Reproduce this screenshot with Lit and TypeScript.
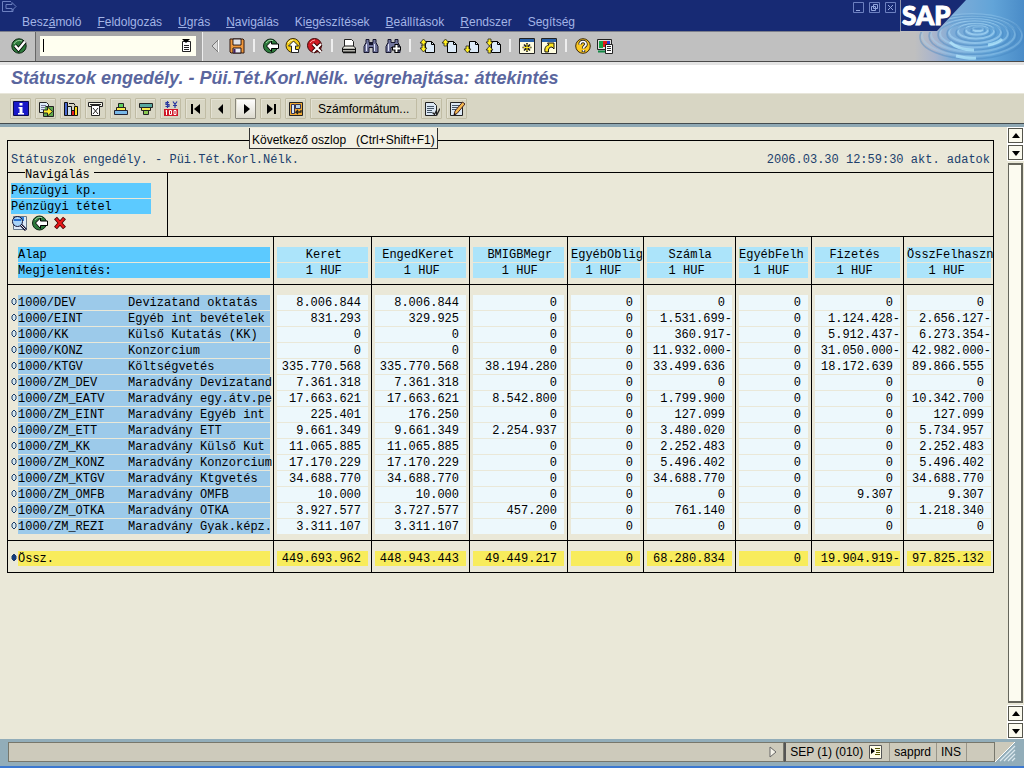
import { LitElement, html, css, svg, nothing } from "lit";
import { customElement } from "lit/decorators.js";

const pageShape = svg`<path d="M6.5 3.5h6l3 3v8h-9z" fill="#dceaf8" stroke="#000"/><path d="M12.5 3.5v3h3" fill="none" stroke="#000"/>`;
const upHead = (x: number, y: number) => svg`<path d="M${x} ${y + 4}l3.5-4 3.5 4h-2v3h-3v-3z" fill="#ffee20" stroke="#222" stroke-width=".8"/>`;
const downHead = (x: number, y: number) => svg`<path d="M${x} ${y + 3}l3.5 4 3.5-4h-2v-3h-3v3z" fill="#ffee20" stroke="#222" stroke-width=".8"/>`;

const icons: Record<string, unknown> = {
  check: svg`<circle cx="8" cy="8" r="7.2" fill="#2d7a3c" stroke="#0c2412"/><path d="M3 6a6 6 0 0 1 8-3" stroke="#9ccf9c" fill="none"/><path d="M4 7.5l3.5 4 6.5-8" fill="none" stroke="#000" stroke-width="4"/><path d="M4 7.5l3.5 4 6.5-8" fill="none" stroke="#fff" stroke-width="2.4"/>`,
  save: svg`<path d="M1 1h13l1 1v13H2l-1-1z" fill="#f0983c" stroke="#301810"/><path d="M4 1h8v6H4z" fill="#fff" stroke="#201010"/><path d="M4 10h8v5H4z" fill="#e8e8f4" stroke="#201010"/><path d="M5.5 11v4" stroke="#402060" stroke-width="2"/><path d="M5 3h6M5 5h6" stroke="#a8a8b8" stroke-width=".7"/>`,
  back: svg`<circle cx="7.5" cy="8" r="7" fill="#2d7a3c" stroke="#0c2412"/><path d="M3 5a6 6 0 0 1 7-2.5" stroke="#9ccf9c" fill="none"/><path d="M3.5 8l5-5v3h7v4.500h-7v3z" fill="#fff" stroke="#000"/>`,
  exit: svg`<circle cx="8" cy="7.5" r="7" fill="#f4cc18" stroke="#3c2c08"/><path d="M3 5a6 6 0 0 1 5-3" stroke="#fff8b0" fill="none"/><path d="M8.5 3l5 5h-3v3.5h3v3h-7V8h-3z" fill="#fff" stroke="#222"/>`,
  cancel: svg`<circle cx="7.5" cy="7.5" r="7" fill="#d01c24" stroke="#3c0808"/><path d="M3 5a6 6 0 0 1 5-3" stroke="#ffa0a0" fill="none"/><path d="M6 6l8 8M14 6l-8 8" stroke="#300" stroke-width="4"/><path d="M6 6l8 8M14 6l-8 8" stroke="#fff" stroke-width="2.2"/>`,
  print: svg`<path d="M3.5 1.5h7l2 2v6h-9z" fill="#fff" stroke="#222"/><path d="M1.5 10l2-2h9l2 2v4h-13z" fill="#e8e8e0" stroke="#111"/><path d="M1 11.5h14M2 14.5h13" stroke="#111" stroke-width="1.4"/>`,
  find: svg`<path d="M3 1.5h3v3h4v-3h3v3l2 4v6h-5v-5H6v5H1v-6l2-4z" fill="#70749c" stroke="#15152c"/><path d="M3.5 6v7M11.5 6v7" stroke="#e0e4f8"/><path d="M6 6h4" stroke="#15152c" stroke-width="2"/>`,
  findnext: svg`<path d="M3 1.5h3v3h4v-3h3v3l2 4v6h-5v-5H6v5H1v-6l2-4z" fill="#70749c" stroke="#15152c"/><path d="M3.5 6v7" stroke="#e0e4f8"/><path d="M11.5 6v9M7 10.5h9" stroke="#000" stroke-width="4"/><path d="M11.5 7v7M8 10.5h7" stroke="#fff" stroke-width="2"/>`,
  first: svg`${pageShape}${upHead(1, 1)}${downHead(1, 7)}`,
  prev: svg`${pageShape}${upHead(1, 1)}`,
  next: svg`${pageShape}${downHead(1, 8)}`,
  last: svg`${pageShape}${downHead(1, 1)}${upHead(1, 8)}`,
  session: svg`<path d="M.5.5h15v15H.5z" fill="#fffde0" stroke="#222"/><path d="M1 1h14v3H1z" fill="#2860a8"/><path d="M8 5v9M3.5 9.5h9M5 6.5l6 6M11 6.5l-6 6" stroke="#222" stroke-width="1.6"/><path d="M8 6v7M4.5 9.5h7" stroke="#ffe820"/>`,
  shortcut: svg`<path d="M.5.5h15v15H.5z" fill="#fffde0" stroke="#222"/><path d="M1 1h14v3H1z" fill="#2860a8"/><path d="M4 14c-1-5 2-7 4-7l-1.5-2H13v6l-2-2c-3 0-4 2-3.5 5z" fill="#ffe820" stroke="#111"/>`,
  help: svg`<circle cx="8" cy="8" r="7.3" fill="#fbc820" stroke="#3c2808"/><path d="M5 6.5C5 2 11.5 3 11 6.5 10.5 8.5 8.5 8 8.5 10.5M8.5 12v2" fill="none" stroke="#222" stroke-width="3.4"/><path d="M5 6.5C5 2 11.5 3 11 6.5 10.5 8.5 8.5 8 8.5 10.5M8.5 12v1.6" fill="none" stroke="#fff" stroke-width="1.7"/>`,
  layout: svg`<path d="M.5 1.5h14v10H.5z" fill="#ddd" stroke="#222"/><path d="M2 3h4v7H2z" fill="#18a048"/><path d="M6 3h4v6H6z" fill="#e01818"/><path d="M10 3h3v5h-3z" fill="#2838d0"/><path d="M1 13.500h8" stroke="#184" stroke-width="2"/><path d="M8.5 6.5h7v9h-7z" fill="#fff" stroke="#222"/><path d="M10 8.5h4M10 10.5h4M10 12.5h4" stroke="#333"/>`,
  info: svg`<path d="M.5.5h15v14H.5z" fill="#1818c8" stroke="#0a0a50"/><path d="M6.5 2h3v2.5h-3zM5.5 6h4v6h1.5v1.5h-6V12h1.5V7.5h-1z" fill="#fff"/>`,
  export: svg`<path d="M1.5 1.5h7l2 2v8h-9z" fill="#dceaf8" stroke="#222"/><path d="M3 4.5h5M3 6.5h5M3 8.5h3" stroke="#779"/><path d="M7.5 5.5h8v10h-10v-4" fill="#60a850" stroke="#222"/><path d="M5.5 9h4V6l5 4.5-5 4.5v-3h-4z" fill="#ffee30" stroke="#222"/>`,
  chart: svg`<path d="M1.5 1.5h3v13h-3z" fill="#4868d0" stroke="#111"/><path d="M4.5 5.5h4v9h-4z" fill="#c8dcf0" stroke="#111"/><path d="M8.5 9.5h3v5h-3z" fill="#e82020" stroke="#111"/><path d="M11.5 5.5h3v9h-3z" fill="#ffe020" stroke="#111"/><path d="M6 2.5h5l1 2" fill="none" stroke="#111"/>`,
  filter: svg`<path d="M.5 1.5h14v4H.5z" fill="#f4f4e8" stroke="#222"/><path d="M3.5 4.500h8v10h-8z" fill="#fff" stroke="#222"/><path d="M5 7l5 6M10 7l-5 6M2 3.5h11" stroke="#222"/>`,
  sortup: svg`<path d="M5.5 2.5h5v4h-5z" fill="#5cd060" stroke="#222"/><path d="M3.5 6.5h9v3h-9z" fill="#f8e850" stroke="#222"/><path d="M1.5 9.5h13v4h-13z" fill="#78b8e8" stroke="#223"/>`,
  sortdown: svg`<path d="M1.5 2.5h13v4h-13z" fill="#58a8a0" stroke="#222"/><path d="M3.5 6.5h9v3h-9z" fill="#f8e850" stroke="#222"/><path d="M5.5 9.5h5v4h-5z" fill="#88c850" stroke="#222"/>`,
  currency: svg`<path d="M1 8h14v7H1z" fill="#d01828"/><path d="M3.5 9v5M2.5 10h1M6.5 9.5h2v4h-2zM11 9.5h2v4h-2z" fill="none" stroke="#fff"/><path d="M6 1.5H3v2h3v2H2.5M4.5 0v7M10 .5l2 3 2-3M12 3v4M10 4.5h4" fill="none" stroke="#2838a0" stroke-width="1.2"/>`,
  colfirst: svg`<path d="M4 3v10" stroke="#000" stroke-width="2"/><path d="M12 3v10L6 8z"/>`,
  colprev: svg`<path d="M10 3v10L5 8z"/>`,
  colnext: svg`<path d="M6 3v10l6-5z"/>`,
  collast: svg`<path d="M12 3v10" stroke="#000" stroke-width="2"/><path d="M4 3v10l6-5z"/>`,
  jump: svg`<path d="M1.500 1.5h13v13h-13z" fill="#f0a830" stroke="#222"/><path d="M3.5 3.500h3v9h-3z" fill="#d8e8f8" stroke="#335"/><path d="M7.500 3.500h5v4h-5z" fill="#b8d4e8" stroke="#335"/><path d="M13.500 11H8l2-2M8 11l2 2M13 11V9" fill="none" stroke="#222" stroke-width="1.3"/>`,
  details: svg`<path d="M1.5 1.5h8l3 3v10h-11z" fill="#dce8f4" stroke="#222"/><path d="M3 5.5h7M3 7.5h7M3 9.5h5M3 11.5h5" stroke="#456"/><path d="M8.5 11.5l2 2 1.5-3 1 3 3-6" fill="none" stroke="#222" stroke-width="1.3"/>`,
  edit: svg`<path d="M1.5 1.5h12v13h-12z" fill="#dce8f4" stroke="#222"/><path d="M3 4.5h8M3 6.5h6M3 8.5h4" stroke="#456"/><path d="M5 14l1-4 7.5-9 2.5 2-8 9.5z" fill="#f4b850" stroke="#422"/><path d="M5 14l.5-2 1.5 1.2z"/>`,
  search: svg`<path d="M2.5 1.5h13v13h-13z" fill="#dceaf8" stroke="#678"/><path d="M5 2h8v4H5z" fill="#3080d8"/><circle cx="6.5" cy="6.5" r="5" fill="#a8d4f8" stroke="#113"/><path d="M3 5h7" stroke="#2870d0" stroke-width="2"/><path d="M10 10l5 5" stroke="#113" stroke-width="3"/><path d="M10 10l4.5 4.5" stroke="#eee"/>`,
  delete: svg`<path d="M2.5 3l9 10M11.5 3l-9 10" stroke="#400" stroke-width="4"/><path d="M3 3.5l8 9M11 3.5l-8 9" stroke="#e81818" stroke-width="2.4"/>`,
  up: svg`<path d="M8 5l4 5H4z"/>`,
  down: svg`<path d="M8 11l4-5H4z"/>`,
  list: svg`<path d="M4.5 4.5h8v10h-8z" fill="#fff" stroke="#222"/><path d="M4 2h8l-4 4z"/><path d="M6 8.5h5M6 10.5h5M6 12.5h5" stroke="#222"/>`,
  system: svg`<path d="M1.5 1.5h12v13h-12z" fill="#fffde8" stroke="#555"/><path d="M3 4l4 3-4 3z"/><path d="M7 4.5h5M8 6.5h4M8 8.5h4M7 10.5h5" stroke="#550"/>`,
  fold: svg`<path d="M11 2v12L5 8z" fill="#d8d8d8" stroke="#777"/><path d="M11.5 2v12" stroke="#fff"/>`,
  unfold: svg`<path d="M5 3v10l6-5z" fill="#f4f2e8" stroke="#666"/>`,
};

const icon = (name: string) => html`<svg class="icon" viewBox="0 0 16 16" aria-hidden="true">${icons[name]}</svg>`;

const menu: [string, string, string][] = [
  ["Besz", "á", "moló"], ["", "F", "eldolgozás"], ["", "U", "grás"], ["", "N", "avigálás"],
  ["Ki", "e", "gészítések"], ["", "B", "eállítások"], ["", "R", "endszer"], ["Se", "g", "ítség"],
];

const systemTools = [
  ["fold", "save"], ["back", "exit", "cancel"], ["print", "find", "findnext"],
  ["first", "prev", "next", "last"], ["session", "shortcut"], ["help", "layout"],
];

// Title, indent of the title, indent of the unit (in characters), column width.
const columns: [string, number, number, number][] = [
  ["Keret", 4, 4, 98], ["EngedKeret", 1, 4, 98], ["BMIGBMegr", 2, 4, 98], ["EgyébOblig", 0, 2, 76],
  ["Számla", 3, 3, 92], ["EgyébFelh", 0, 2, 76], ["Fizetés", 2, 3, 92], ["ÖsszFelhaszn", 0, 3, 89],
];

const rows: [string, string, string][] = [
  ["DEV", "Devizatand oktatás", "8.006.844 8.006.844 0 0 0 0 0 0"],
  ["EINT", "Egyéb int bevételek", "831.293 329.925 0 0 1.531.699- 0 1.124.428- 2.656.127-"],
  ["KK", "Külső Kutatás (KK)", "0 0 0 0 360.917- 0 5.912.437- 6.273.354-"],
  ["KONZ", "Konzorcium", "0 0 0 0 11.932.000- 0 31.050.000- 42.982.000-"],
  ["KTGV", "Költségvetés", "335.770.568 335.770.568 38.194.280 0 33.499.636 0 18.172.639 89.866.555"],
  ["ZM_DEV", "Maradvány Devizatand", "7.361.318 7.361.318 0 0 0 0 0 0"],
  ["ZM_EATV", "Maradvány egy.átv.pe", "17.663.621 17.663.621 8.542.800 0 1.799.900 0 0 10.342.700"],
  ["ZM_EINT", "Maradvány Egyéb int", "225.401 176.250 0 0 127.099 0 0 127.099"],
  ["ZM_ETT", "Maradvány ETT", "9.661.349 9.661.349 2.254.937 0 3.480.020 0 0 5.734.957"],
  ["ZM_KK", "Maradvány Külső Kut", "11.065.885 11.065.885 0 0 2.252.483 0 0 2.252.483"],
  ["ZM_KONZ", "Maradvány Konzorcium", "17.170.229 17.170.229 0 0 5.496.402 0 0 5.496.402"],
  ["ZM_KTGV", "Maradvány Ktgvetés", "34.688.770 34.688.770 0 0 34.688.770 0 0 34.688.770"],
  ["ZM_OMFB", "Maradvány OMFB", "10.000 10.000 0 0 0 0 9.307 9.307"],
  ["ZM_OTKA", "Maradvány OTKA", "3.927.577 3.727.577 457.200 0 761.140 0 0 1.218.340"],
  ["ZM_REZI", "Maradvány Gyak.képz.", "3.311.107 3.311.107 0 0 0 0 0 0"],
];
const totals = "449.693.962 448.943.443 49.449.217 0 68.280.834 0 19.904.919- 97.825.132";

@customElement("sap-brand")
class SapBrand extends LitElement {
  static styles = css`
    :host { display: block; }
    svg { display: block; width: 124px; height: 61px; }
    text { font: 900 26px Lato, sans-serif; fill: #fff; stroke: #fff; stroke-width: 1px; }
  `;
  render() {
    return html`<svg viewBox="0 0 124 61" role="img" aria-label="SAP">
      <defs>
        <linearGradient id="water" x1="0" x2="1" y1="0" y2="0">
          <stop offset="0" stop-color="#bfbfbf"/><stop offset=".12" stop-color="#bfbfbf"/>
          <stop offset=".28" stop-color="#a9b4cc"/><stop offset=".42" stop-color="#7fadd8"/>
          <stop offset=".75" stop-color="#62a4d8"/><stop offset="1" stop-color="#4a8cc8"/>
        </linearGradient>
        <clipPath id="pool"><path d="M66 0h58v61H10V32h27z"/></clipPath>
      </defs>
      <rect width="124" height="61" fill="url(#water)"/>
      <g clip-path="url(#pool)" fill="none">
        ${[5, 11, 18, 26, 34, 42, 50].map((r, i) => svg`
          <ellipse cx=${78 - i} cy=${29 + i} rx=${r} ry=${r * 0.42} stroke="#a8d8f6" stroke-width="2" opacity=${0.8 - i * 0.08}/>
          <ellipse cx=${78 - i} cy=${31 + i} rx=${r + 2} ry=${r * 0.42 + 1} stroke="#4484c0" stroke-width="1.6" opacity=".4"/>`)}
        <path d="M50 42q8 8 24 8M56 56q14 3 20 2M88 45q10-2 14-6" stroke="#b8ecff" stroke-width="3" opacity=".7"/>
      </g>
      <path d="M0 0h66L37 31H0z" fill="#172a74"/>
      <path d="M.5 0v31" stroke="#8d94a8"/>
      <text x="2" y="25">SAP</text>
    </svg>`;
  }
}

@customElement("app-root")
class AppRoot extends LitElement {
  static styles = css`
    :host { display: flex; flex-direction: column; min-height: 100vh; position: relative; background: #eae8d8; color: #000; font: 12px/16px "Liberation Sans", Arial, sans-serif; }
    *, *::before, *::after { box-sizing: border-box; }
    button { font: inherit; color: inherit; margin: 0; padding: 0; border: 0; background: none; display: flex; align-items: center; justify-content: center; }
    .icon { width: 16px; height: 16px; display: block; flex: none; }
    .titlebar { height: 32px; background: #172a74; border-bottom: 1px solid #7c7f8c; display: flex; justify-content: space-between; align-items: flex-start; }
    .lead { display: flex; }
    .appmark { width: 16px; height: 14px; margin-left: 1px; }
    .menu { display: flex; gap: 16px; margin: 14px 0 0 5px; color: #a3b4e6; }
    .windowbox { display: flex; gap: 5px; margin: 2px 128px 0 0; }
    .windowbox svg { width: 11px; height: 11px; display: block; }
    .brand { position: absolute; top: 0; right: 0; }
    .system { height: 30px; background: #c0c0c0; border-bottom: 1px solid #4a4a4a; display: flex; align-items: stretch; }
    .enter { width: 36px; border-right: 1px solid #666; padding: 0 5px 2px 7px; }
    .command { background: #a6a6a6; border-right: 1px solid #eee; width: 167px; padding: 4px 6px 5px 4px; position: relative; display: flex; }
    .command input { flex: 1; min-width: 0; border: 0; border-radius: 0; padding: 0 20px 0 4px; background: #fffff0; font: inherit; outline: 0; }
    .history { position: absolute; right: 8px; top: 5px; height: 16px; width: 16px; }
    .caret { position: absolute; left: 7px; top: 7px; width: 1px; height: 13px; background: #000; }
    .tools { display: flex; align-items: center; gap: 6px; padding: 0 0 2px 4px; }
    .rule { width: 6px; height: 13px; background: linear-gradient(90deg, transparent 2px, #eee 2px, #eee 4px, transparent 4px); }
    .heading { margin: 0; height: 31px; background: #fff; border-top: 3px solid #e4e4e4; font: italic bold 18px/26px "Liberation Sans", Arial, sans-serif; color: #5a669e; padding-left: 11px; white-space: nowrap; }
    .actions { background: #d8d6c4; border-top: 1px solid #e8e6da; border-bottom: 3px solid #8ea8b4; padding: 4px 10px 5px; display: flex; gap: 4px; position: relative; }
    .actions::after { content: ""; position: absolute; left: 0; right: 0; bottom: 0; height: 1px; background: #434b4e; }
    .action { width: 21px; height: 21px; border: 1px solid #c0bca4; border-radius: 1px; box-shadow: inset 1px 1px #e4e2d4; }
    .action.wide { width: auto; padding: 0 7px; }
    .action.hot { background: linear-gradient(#fff, #dcdace); border-color: #88867a; }
    .anchor { position: relative; }
    .tip { position: absolute; z-index: 3; left: 14px; top: 30px; border: 1px solid #333; border-top: 0; background: #f2f0e4; padding: 4px 2px 0; white-space: pre; }
    .work { flex: 1; display: flex; padding-top: 1px; }
    .sheet { flex: 1; min-width: 0; padding: 12px 14px 0 7px; font: 12px/17px "Liberation Mono", "Courier New", monospace; }
    .report { border: 1px solid #000; }
    .caption { display: flex; justify-content: space-between; padding: 11px 3px 4px; line-height: 16px; color: #20406c; border-bottom: 1px solid #000; }
    .navrow { border-bottom: 1px solid #000; display: flex; }
    .nav { width: 160px; height: 63px; border-right: 1px solid #000; padding: 0 16px 0 3px; }
    .navtitle { position: relative; width: max-content; height: 16px; line-height: 16px; margin: -6px 0 0 14px; padding-right: 4px; background: #eae8d8; }
    .navitem { background: #5ccaff; height: 15px; margin-bottom: 1px; }
    .navtools { display: flex; gap: 5px; margin-top: 1px; }
    table { width: 100%; border-collapse: separate; border-spacing: 0; table-layout: fixed; }
    th, td { font-weight: normal; padding: 0 3px; border-right: 1px solid #000; text-align: left; white-space: pre; }
    tr > :last-child { border-right: 0; padding-right: 2px; }
    .fill { height: 15px; margin-bottom: 1px; background: #edf8fc; }
    thead th { padding-top: 10px; padding-bottom: 5px; border-bottom: 1px solid #000; }
    thead .fill { background: #ace4fa; }
    thead .lead-col .fill { background: #5ccaff; margin-left: 7px; }
    tbody tr:first-child > * { padding-top: 10px; }
    tbody tr:last-child > * { padding-bottom: 5px; border-bottom: 1px solid #000; }
    tfoot tr > * { padding-top: 10px; padding-bottom: 5px; }
    .num { text-align: right; padding-right: 7px; }
    .num.neg { padding-right: 0; }
    .key { display: flex; gap: 1px; }
    .key svg { width: 6px; height: 15px; flex: none; display: block; }
    .key .fill { flex: 1; min-width: 0; display: grid; grid-template-columns: 110px 1fr; background: #9ccaea; }
    tfoot .fill, tfoot .key .fill { background: #f8ec5c; }
    .scroll { width: 16px; display: flex; flex-direction: column; gap: 2px; padding: 0 1px 1px 0; }
    .scroll button { height: 15px; border: 1px solid #55554c; background: #fbfaee; box-shadow: 0 0 0 1px #fff; }
    .thumb { flex: 1; margin: 1px 0; border: 1px solid #66665c; border-width: 2px 2px 2px 1px; background: #fcfbf0; }
    .status { height: 29px; background: #92adb9; border-bottom: 2px solid #3c78d0; padding: 3px 8px 4px; display: flex; }
    .message { flex: 1; border: 1px solid #77776c; background: #cdcabb; display: flex; justify-content: flex-end; align-items: center; padding-right: 2px; }
    .cells { display: flex; background: #cdcabb; border: 1px solid #77776c; border-left: 2px solid #555; }
    .cell { display: flex; align-items: center; gap: 5px; padding: 0 5px 0 4px; border-right: 1px solid #99968a; }
    .cell.blank { width: 27px; border: 0; }
    .grip { width: 21px; height: 20px; display: block; }
  `;

  private key(label: string, name: string, total = false) {
    return html`<th scope="row"><div class="key">
      <svg viewBox="0 0 6 15"><path d="M3 3l2 2v3l-2 2-2-2V5z" fill=${total ? "#123a80" : "#d8eaf0"} stroke="#1c3c68"/></svg><div class="fill"><span>${label}</span><span>${name}</span></div></div></th>`;
  }

  private values(line: string) {
    return line.split(" ").map(v => html`<td><div class="fill num ${v.endsWith("-") ? "neg" : ""}">${v}</div></td>`);
  }

  private action(name: string) {
    const hot = name === "colnext";
    return html`<div class="anchor"><button class="action ${hot ? "hot" : ""}" aria-label=${name}>${icon(name)}</button>${hot ? html`<span class="tip" role="tooltip">Következő oszlop   (Ctrl+Shift+F1)</span>` : nothing}</div>`;
  }

  render() {
    return html`
      <header class="titlebar">
        <div class="lead">
          <svg class="appmark" viewBox="0 0 16 14" fill="none" stroke="#6c80c0"><path d="M10 1.5H1.5v10H12V9M5 4.5h6v-2l4 4-4 4v-2H5z"/></svg>
          <nav class="menu">${menu.map(([a, b, c]) => html`<button><span>${a}<u>${b}</u>${c}</span></button>`)}</nav>
        </div>
        <div class="windowbox">
          ${["M3 8.5h4", "M4.5 2.5h4v4h-4zM2.5 4.5h4v4h-4z", "M3 3l5 5M8 3L3 8"].map(d => html`<button aria-label="ablak"><svg viewBox="0 0 11 11" fill="none" stroke="#6c80c0"><path d="M.5.5h10v10H.5z"/><path d=${d} stroke="#93a6de"/></svg></button>`)}
        </div>
      </header>
      <div class="system">
        <button class="enter" aria-label="Enter">${icon("check")}</button>
        <div class="command"><input aria-label="Parancs"><span class="caret"></span><button class="history" aria-label="Előzmények">${icon("list")}</button></div>
        <div class="tools">
          ${systemTools.map((group, i) => html`${i ? html`<span class="rule"></span>` : nothing}${group.map(n => html`<button aria-label=${n}>${icon(n)}</button>`)}`)}
        </div>
      </div>
      <sap-brand class="brand"></sap-brand>
      <h1 class="heading">Státuszok engedély. - Püi.Tét.Korl.Nélk. végrehajtása: áttekintés</h1>
      <div class="actions">
        ${["info", "export", "chart", "filter", "sortup", "sortdown", "currency", "colfirst", "colprev", "colnext", "collast", "jump"].map(n => this.action(n))}
        <button class="action wide">Számformátum...</button>
        ${["details", "edit"].map(n => this.action(n))}
      </div>
      <main class="work">
        <div class="sheet">
          <div class="report">
            <div class="caption"><span>Státuszok engedély. - Püi.Tét.Korl.Nélk.</span><span>2006.03.30 12:59:30 akt. adatok</span></div>
            <div class="navrow"><div class="nav">
              <div class="navtitle">Navigálás</div>
              <div class="navitem">Pénzügyi kp.</div>
              <div class="navitem">Pénzügyi tétel</div>
              <div class="navtools">${["search", "back", "delete"].map(n => html`<button aria-label=${n}>${icon(n)}</button>`)}</div>
            </div></div>
            <table>
              <colgroup><col style="width:266px">${columns.map(c => html`<col style="width:${c[3]}px">`)}</colgroup>
              <thead><tr>
                <th class="lead-col" scope="col"><div class="fill">Alap</div><div class="fill">Megjelenítés:</div></th>
                ${columns.map(([n, a, b]) => html`<th scope="col"><div class="fill">${" ".repeat(a) + n}</div><div class="fill">${" ".repeat(b)}1 HUF</div></th>`)}
              </tr></thead>
              <tbody>${rows.map(([c, n, v]) => html`<tr>${this.key("1000/" + c, n)}${this.values(v)}</tr>`)}</tbody>
              <tfoot><tr>${this.key("Össz.", "", true)}${this.values(totals)}</tr></tfoot>
            </table>
          </div>
        </div>
        <div class="scroll">
          <button aria-label="fel">${icon("up")}</button><button aria-label="le">${icon("down")}</button>
          <div class="thumb"></div>
          <button aria-label="fel">${icon("up")}</button><button aria-label="le">${icon("down")}</button>
        </div>
      </main>
      <footer class="status">
        <div class="message">${icon("unfold")}</div>
        <div class="cells">
          <div class="cell">SEP (1) (010) ${icon("system")}</div>
          <div class="cell">sapprd</div><div class="cell">INS</div><div class="cell blank"></div>
        </div>
        <svg class="grip" viewBox="0 0 21 20"><path d="M0 0h20L0 20z" fill="#cdcabb"/><path d="M20 0L0 20" stroke="#fff"/><path d="M20 4L5 19M20 8L9 19M20 12l-7 7M20 16l-3 3" stroke="#dce8ee" stroke-width="1.3"/></svg>
      </footer>`;
  }
}
